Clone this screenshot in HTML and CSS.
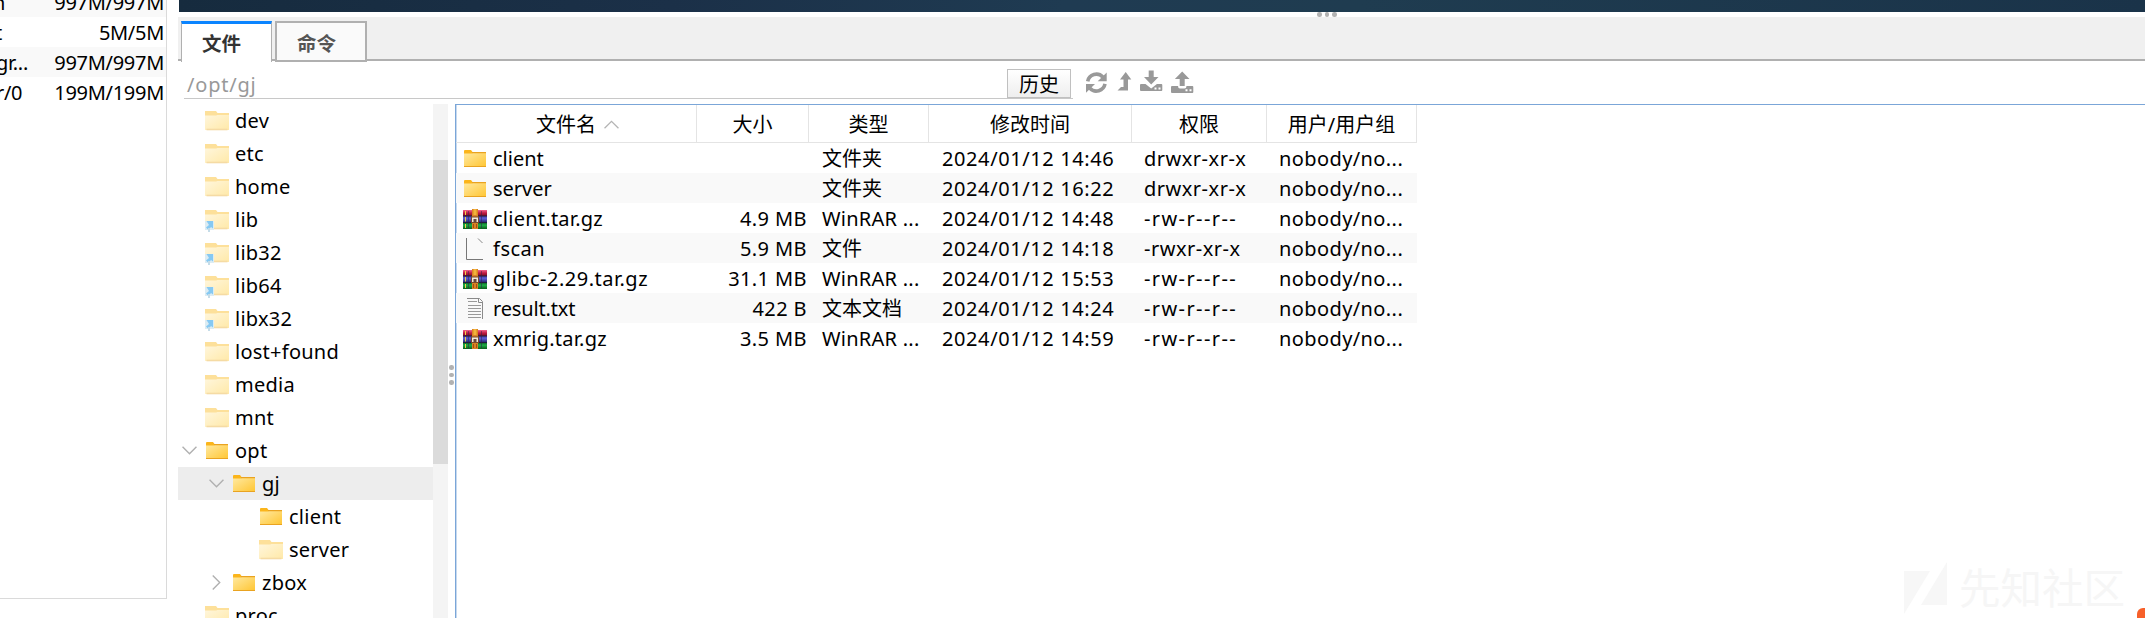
FILE: index.html
```html
<!DOCTYPE html>
<html lang="zh-CN">
<head>
<meta charset="utf-8">
<title>/opt/gj</title>
<link rel="stylesheet" href="styles.css">
</head>
<body>
<svg class="defs" width="0" height="0" aria-hidden="true">
  <defs>
    <linearGradient id="gold" x1="0" y1="0" x2="1" y2="1"><stop offset="0" stop-color="#ffe9a0"/><stop offset="1" stop-color="#ffc634"/></linearGradient>
    <linearGradient id="cream" x1="0" y1="0" x2="1" y2="1"><stop offset="0" stop-color="#fff6dc"/><stop offset="1" stop-color="#ffe9a8"/></linearGradient>
    <linearGradient id="red" x1="0" y1="0" x2="0" y2="1"><stop offset="0" stop-color="#f0668c"/><stop offset=".5" stop-color="#c01c44"/><stop offset="1" stop-color="#7c1020"/></linearGradient>
    <linearGradient id="blue" x1="0" y1="0" x2="0" y2="1"><stop offset="0" stop-color="#4848a8"/><stop offset=".4" stop-color="#5a5ad0"/><stop offset="1" stop-color="#25256e"/></linearGradient>
    <linearGradient id="green" x1="0" y1="0" x2="0" y2="1"><stop offset="0" stop-color="#0a5a20"/><stop offset=".4" stop-color="#1fae48"/><stop offset="1" stop-color="#0c5c1c"/></linearGradient>
  </defs>
  <symbol id="folder" viewBox="0 0 24 22">
    <path d="M1 3q0-1 1-1h6l1.500 2H23v4H1z" fill="#fbb51b"/>
    <path d="M1 5.500h7.500L10 5h13v13.500H1z" fill="url(#gold)"/>
    <path d="M9 4h14v1.200H9zM1 18h22v1H1z" fill="#e9a321"/>
  </symbol>
  <symbol id="faded" viewBox="0 0 24 22">
    <path d="M0 1h11l1.500 2H24v4H0z" fill="#fde09a"/>
    <path d="M0 5.500h11l1.500-.5H24v15H0z" fill="url(#cream)"/>
    <path d="M1.500 18.700h21v1.600h-21z" fill="#f5dba4"/>
  </symbol>
  <symbol id="link" viewBox="0 0 24 26">
    <path d="M0 1h11l1.500 2H24v4H0z" fill="#fde09a"/>
    <path d="M0 5.500h11l1.500-.5H24v15H0z" fill="url(#cream)"/>
    <path d="M8 18.700h14.500v1.600H8z" fill="#f5dba4"/>
    <path d="M0 12h9v9H0z" fill="#dcecf3"/>
    <path d="M1.500 12H8v7.500l-2-1.500-2.500 3-2.500-2.500 3-2.500z" fill="#86c9f2"/>
    <path d="M3 19h2v4H3z" fill="#c5dce8"/>
  </symbol>
  <symbol id="rar" viewBox="0 0 24 22">
    <path d="M0 2h24v6H0z" fill="url(#red)"/>
    <path d="M0 8h24v6.500H0z" fill="url(#blue)"/>
    <path d="M0 14.500h24V21H0z" fill="url(#green)"/>
    <path d="M0 7.500h24v1H0zM0 14h24v1H0z" fill="#221c3c"/>
    <path d="M2 3h1v4H2zM2 9h1v4.500H2zM2 16h1v4H2z" fill="#f3d34a"/>
    <path d="M5 3h1v17H5zM18 3h1v17h-1z" fill="#30204e" opacity=".5"/>
    <path d="M9 1h6v20H9z" fill="#d98324"/>
    <path d="M10.500 1h3v6h-3z" fill="#f2b33c"/>
    <path d="M8 8.500h8V15H8z" fill="#7a4a2c"/>
    <path d="M9 9.500h6V14H9z" fill="#f2eadc"/>
    <path d="M10.500 11h3v3h-3z" fill="#674638"/>
    <path d="M10 16h1v4h-1zM13 16h1v4h-1z" fill="#a14f13"/>
  </symbol>
  <symbol id="blank" viewBox="0 0 24 24">
    <path d="M3.500 1v21.500H20" fill="none" stroke="#777" stroke-width="1"/>
    <path d="M15 1.500l4.500 4.500" fill="none" stroke="#888" stroke-width="1"/>
  </symbol>
  <symbol id="text" viewBox="0 0 24 24">
    <path d="M4 1.500h12.500l3 3V22" fill="none" stroke="#8a8a8a"/>
    <path d="M15.500 1.500v4h4" fill="none" stroke="#8a8a8a"/>
    <path d="M5 4.500h9M5 8.500h13M5 11.500h13M5 14.500h13M5 17.500h13M5 20.500h13" fill="none" stroke="#999"/>
  </symbol>
</svg>

<div class="screen">
  <aside class="disks">
    <div class="disk shade"><span class="mount">n</span><span>997M/997M</span></div>
    <div class="disk"><span class="mount m2">t</span><span>5M/5M</span></div>
    <div class="disk shade"><span class="mount m3">gr...</span><span>997M/997M</span></div>
    <div class="disk"><span class="mount m4">r/0</span><span>199M/199M</span></div>
  </aside>

  <main class="main">
    <div class="terminal"></div>
    <div class="split-h"><i></i><i></i><i></i></div>
    <nav class="tabs">
      <div class="tab active">文件</div>
      <div class="tab">命令</div>
    </nav>
    <div class="bar">
      <div class="path"><span>/opt/gj</span><button class="history">历史</button></div>
      <svg class="tools" width="112" height="26" viewBox="0 0 112 26" fill="#999">
        <path d="M2.700 10.300A8.800 8.800 0 0 1 17.800 6M20 12.900A8.800 8.800 0 0 1 4.900 17.200" fill="none" stroke="#999" stroke-width="3.600"/>
        <path d="M21.700 1.500v8.800h-9zM1 21.700v-8.800h9z"/>
        <path d="M40.700 1l5.600 7.500h-3.300v11H32.500l3.500-3.500h2.500V8.500H35z"/>
        <path d="M63.700-.5h5V6h4.800l-7.300 7.500L59 6h4.700zM56 13h4.500l5.700 4.500 5.700-4.500h4.400q1 0 1 1v5q0 1-1 1H56q-1 0-1-1v-5q0-1 1-1z"/>
        <path d="M97.200.5l7.300 7.500h-4.800v7h-5V8h-4.800zM87 15h6q0 2.500 2 2.500h4.500q2 0 2-2.500h5.800q1 0 1 1v5q0 1-1 1H87q-1 0-1-1v-5q0-1 1-1z"/>
        <path d="M69.500 16.500h2v2h-2zM73.500 16.500h2v2h-2zM100.500 18.300h2v2h-2zM104.500 18.300h2v2h-2z" fill="#fff"/>
      </svg>
    </div>

    <div class="panes">
      <div class="tree">
        <div class="node"><svg class="ico"><use href="#faded"/></svg>dev</div>
        <div class="node"><svg class="ico"><use href="#faded"/></svg>etc</div>
        <div class="node"><svg class="ico"><use href="#faded"/></svg>home</div>
        <div class="node"><svg class="ico ln"><use href="#link"/></svg>lib</div>
        <div class="node"><svg class="ico ln"><use href="#link"/></svg>lib32</div>
        <div class="node"><svg class="ico ln"><use href="#link"/></svg>lib64</div>
        <div class="node"><svg class="ico ln"><use href="#link"/></svg>libx32</div>
        <div class="node"><svg class="ico"><use href="#faded"/></svg>lost+found</div>
        <div class="node"><svg class="ico"><use href="#faded"/></svg>media</div>
        <div class="node"><svg class="ico"><use href="#faded"/></svg>mnt</div>
        <div class="node open"><svg class="chev" viewBox="0 0 14 8"><path d="M.5.500L7 7 13.500.500"/></svg><svg class="ico"><use href="#folder"/></svg>opt</div>
        <div class="node open l2 selected"><svg class="chev" viewBox="0 0 14 8"><path d="M.5.500L7 7 13.500.500"/></svg><svg class="ico"><use href="#folder"/></svg>gj</div>
        <div class="node l3"><svg class="ico"><use href="#folder"/></svg>client</div>
        <div class="node l3"><svg class="ico"><use href="#faded"/></svg>server</div>
        <div class="node open l2"><svg class="chev shut" viewBox="0 0 8 14"><path d="M.5.500L7 7 .5 13.500"/></svg><svg class="ico"><use href="#folder"/></svg>zbox</div>
        <div class="node"><svg class="ico"><use href="#faded"/></svg>proc</div>
      </div>
      <div class="scroll"><div class="thumb"></div></div>
      <div class="split-v"><i></i><i></i><i></i></div>
      <section class="files">
        <div class="row head">
          <div class="sorted">文件名<svg class="sort" viewBox="0 0 14 8"><path d="M.5 7.500L7 1l6.500 6.500"/></svg></div><div>大小</div><div>类型</div><div>修改时间</div><div>权限</div><div>用户/用户组</div>
        </div>
        <div class="row"><div class="name"><svg class="ico"><use href="#folder"/></svg>client</div><div class="size"></div><div class="kind">文件夹</div><div class="time">2024/01/12 14:46</div><div class="perm">drwxr-xr-x</div><div class="own">nobody/no...</div></div>
        <div class="row"><div class="name"><svg class="ico"><use href="#folder"/></svg>server</div><div class="size"></div><div class="kind">文件夹</div><div class="time">2024/01/12 16:22</div><div class="perm">drwxr-xr-x</div><div class="own">nobody/no...</div></div>
        <div class="row"><div class="name dotted"><svg class="ico"><use href="#rar"/></svg>client.tar.gz</div><div class="size">4.9 MB</div><div class="kind latin">WinRAR ...</div><div class="time">2024/01/12 14:48</div><div class="perm ro">-rw-r--r--</div><div class="own">nobody/no...</div></div>
        <div class="row"><div class="name wide"><svg class="ico doc"><use href="#blank"/></svg>fscan</div><div class="size">5.9 MB</div><div class="kind">文件</div><div class="time">2024/01/12 14:18</div><div class="perm">-rwxr-xr-x</div><div class="own">nobody/no...</div></div>
        <div class="row"><div class="name wide"><svg class="ico"><use href="#rar"/></svg>glibc-2.29.tar.gz</div><div class="size">31.1 MB</div><div class="kind latin">WinRAR ...</div><div class="time">2024/01/12 15:53</div><div class="perm ro">-rw-r--r--</div><div class="own">nobody/no...</div></div>
        <div class="row"><div class="name tight"><svg class="ico doc"><use href="#text"/></svg>result.txt</div><div class="size">422 B</div><div class="kind">文本文档</div><div class="time">2024/01/12 14:24</div><div class="perm ro">-rw-r--r--</div><div class="own">nobody/no...</div></div>
        <div class="row"><div class="name dotted"><svg class="ico"><use href="#rar"/></svg>xmrig.tar.gz</div><div class="size">3.5 MB</div><div class="kind latin">WinRAR ...</div><div class="time">2024/01/12 14:59</div><div class="perm ro">-rw-r--r--</div><div class="own">nobody/no...</div></div>
      </section>
    </div>
  </main>

  <div class="watermark">
    <svg width="44" height="54" viewBox="0 0 44 54"><path d="M0 10h26L0 53zM43 1v43H17z" fill="#f7f7f7"/></svg>
    <span>先知社区</span>
  </div>
  <div class="badge"></div>
</div>
</body>
</html>
```
FILE: styles.css
```css
* { box-sizing: border-box; }
body {
  margin: 0;
  background: #fff;
  color: #000;
  font: 20px/30px "Noto Sans", "Noto Sans CJK SC", sans-serif;
}
.defs { position: absolute; }
.screen {
  position: relative;
  display: flex;
  width: 2145px;
  height: 618px;
  overflow: hidden;
}

/* disk usage list */
.disks {
  width: 167px;
  height: 599px;
  margin-right: 11px;
  border: solid #dadada;
  border-width: 0 1px 1px 0;
  overflow: hidden;
  flex: none;
}
.disk {
  display: flex;
  justify-content: space-between;
  height: 30px;
  padding-right: 2px;
  line-height: 32px;
  letter-spacing: -0.3px;
}
.disk:first-child { margin-top: -13px; }
.shade { background: #f9f9f9; }
.mount { margin-left: -7px; }
.m2 { margin-left: -5px; }
.m3 { margin-left: -4px; }
.m4 { margin-left: -4px; }

.main { flex: 1; display: flex; flex-direction: column; min-width: 0; }
.terminal {
  height: 12px;
  margin-left: 1px;
  flex: none;
  background: linear-gradient(90deg, #162b3e, #1b3048 25%, #1f3b52 45%, #1f3c50 60%, #1a3349);
}
.split-h, .split-v { display: flex; }
.split-h { height: 5px; gap: 3px; padding-left: 1139px; flex: none; }
.split-h i, .split-v i { width: 4.500px; height: 4.500px; border-radius: 50%; background: #b2b2b2; }

.tabs {
  display: flex;
  align-items: flex-start;
  gap: 3px;
  height: 44px;
  padding: 4px 0 0 3px;
  background: #f0f0f0;
  border-bottom: 2px solid #b0b0b0;
  flex: none;
}
.tab {
  width: 92px;
  height: 41px;
  padding-left: 20px;
  border: 2px solid #b0b0b0;
  background: #fafafa;
  color: #555;
  font-weight: 700;
  font-size: 19.500px;
  line-height: 41px;
}
.tab.active {
  width: 91px;
  border-width: 3px 1px 0;
  border-top-color: #0a84ff;
  background: #fff;
  color: #333;
  line-height: 40px;
}

.bar { display: flex; height: 43px; padding: 7px 0 0 6px; flex: none; }
.path {
  display: flex;
  justify-content: space-between;
  width: 889px;
  height: 31px;
  padding: 1px 2px 0 3px;
  border-bottom: 1px solid #c8c8c8;
  color: #999;
  line-height: 31px;
  letter-spacing: 0.8px;
}
.history {
  width: 64px;
  height: 29px;
  padding: 0;
  border: 1px solid #c0c0c0;
  background: linear-gradient(#fff, #eee);
  font: inherit;
  letter-spacing: 0;
  line-height: 29px;
  color: #000;
}
.tools { margin: 3px 0 0 12px; overflow: visible; }

.panes { display: flex; height: 514px; }
.tree { width: 255px; overflow: hidden; letter-spacing: 0.25px; }
.node {
  display: flex;
  align-items: center;
  height: 33px;
  padding-left: 27px;
}
.ico { width: 24px; height: 22px; margin-right: 6px; flex: none; }
.ico.ln { height: 26px; margin-top: 4px; }
.ico.doc { height: 24px; }
.node.open { padding-left: 4px; }
.l2.open { padding-left: 31px; }
.l3 { padding-left: 81px; }
.selected { background: #ededed; }
.chev { width: 15px; height: 9px; margin-right: 8px; fill: none; stroke: #b0b0b0; stroke-width: 1.300; flex: none; }
.chev.shut { width: 9px; height: 15px; margin: 0 11px 0 3px; }
.scroll { width: 15px; padding-top: 56px; background: #f4f4f4; }
.thumb { height: 304px; background: #dbdbdb; }
.split-v { flex-direction: column; gap: 3px; width: 7px; padding: 261px 0 0 1px; }

.files {
  flex: 1;
  border: solid #7ba6d8;
  border-width: 1px 0 0 1px;
  box-shadow: inset 1px 0 #c7d9ee;
}
.row {
  display: grid;
  grid-template-columns: 241px 112px 120px 203px 135px 150px;
  width: 961px;
  height: 30px;
  line-height: 32px;
}
.row:nth-child(odd) { background: #f9f9f9; }
.row.head { height: 38px; background: none; border-bottom: 1px solid #e4e4e4; line-height: 39px; }
.head div { height: 37px; text-align: center; border-right: 1px solid #e4e4e4; }
.head .sorted { padding-left: 3px; }
.sort { width: 15px; height: 9px; margin-left: 8px; fill: none; stroke: #b4b4b4; stroke-width: 1.200; vertical-align: 3px; }
.name { display: flex; align-items: center; padding-left: 7px; }
.name .ico { margin-top: -1px; }
.name.dotted { letter-spacing: 0.25px; }
.name.wide { letter-spacing: 0.5px; }
.name.tight { letter-spacing: -0.15px; }
.size { text-align: right; padding-right: 2px; letter-spacing: 0.4px; }
.kind { padding-left: 13px; }
.kind.latin { letter-spacing: 0.25px; }
.time { padding-left: 13px; letter-spacing: 0.6px; }
.perm { padding-left: 12px; letter-spacing: 0.5px; }
.perm.ro { letter-spacing: 1.400px; }
.own { padding-left: 12px; letter-spacing: 0.4px; }

/* overlays */
.watermark {
  position: absolute;
  left: 1904px;
  top: 561px;
  display: flex;
  align-items: center;
  gap: 11px;
  color: #f6f6f6;
  font-size: 41.500px;
  line-height: 54px;
}
.badge {
  position: absolute;
  left: 2137px;
  top: 608px;
  width: 20px;
  height: 20px;
  border-radius: 6px;
  background: #f7602a;
}
```
